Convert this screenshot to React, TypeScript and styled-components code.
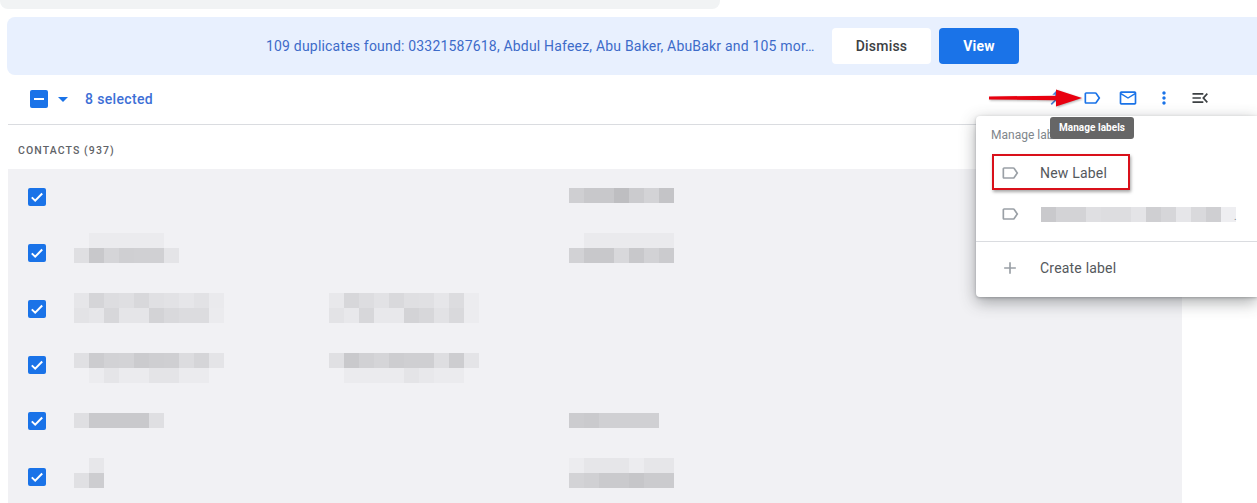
import styled, { createGlobalStyle } from "styled-components";

const GlobalStyle = createGlobalStyle`
  html, body {
    margin: 0;
    padding: 0;
    background: #fff;
    font-family: Roboto, "Liberation Sans", sans-serif;
  }
`;

const Page = styled.div`
  position: relative;
  width: 1257px;
  height: 503px;
  overflow: hidden;
  background: #fff;
`;

const SearchEdge = styled.div`
  width: 720px;
  height: 9px;
  background: #f1f3f4;
  border-radius: 0 0 8px 8px;
`;

const Banner = styled.div`
  display: flex;
  align-items: center;
  height: 58px;
  margin: 8px 0 0 7px;
  padding-left: 259px;
  background: #e8f0fe;
  border-radius: 8px 0 0 8px;
`;

const BannerText = styled.div`
  width: 566px;
  font-size: 14px;
  letter-spacing: 0.19px;
  color: #3d6bc9;
  white-space: nowrap;
`;

const BannerButton = styled.button<{ $primary?: boolean }>`
  height: 36px;
  width: ${(p) => (p.$primary ? "80px" : "99px")};
  margin-right: 8px;
  border: 0;
  border-radius: 4px;
  font-family: Roboto, sans-serif;
  font-size: 14px;
  font-weight: ${(p) => (p.$primary ? 700 : 500)};
  letter-spacing: 0.2px;
  background: ${(p) => (p.$primary ? "#1a73e8" : "#fff")};
  color: ${(p) => (p.$primary ? "#fff" : "#3c4043")};
`;

const Toolbar = styled.div`
  display: flex;
  align-items: center;
  height: 48px;
  margin-left: 8px;
  padding: 0 39px 1px 22px;
  border-bottom: 1px solid #dadce0;
`;

const Caret = styled.span`
  width: 0;
  height: 0;
  margin: 0 17px 0 10px;
  border-left: 5px solid transparent;
  border-right: 5px solid transparent;
  border-top: 5px solid #1a73e8;
`;

const SelectedCount = styled.span`
  flex: 1;
  padding-bottom: 1px;
  font-size: 14px;
  font-weight: 500;
  letter-spacing: 0.35px;
  color: #3d6fd6;
`;

const ToolButton = styled.span`
  display: flex;
  align-items: center;
  justify-content: center;
  width: 36px;
  height: 36px;
  margin-bottom: 2px;
`;

const Icon = styled.svg<{ $color: string }>`
  display: block;
  flex: none;
  width: 20px;
  height: 20px;
  fill: ${(p) => p.$color};
`;

const Checkbox = styled.span`
  display: flex;
  flex: none;
  align-items: center;
  justify-content: center;
  width: 18px;
  height: 18px;
  border-radius: 2px;
  background: #1a73e8;
`;

const SectionTitle = styled.div`
  height: 44px;
  margin-left: 18px;
  font-size: 10.5px;
  font-weight: 500;
  line-height: 51px;
  letter-spacing: 1.1px;
  color: #5f6368;
`;

const Table = styled.div`
  width: 1174px;
  margin-left: 8px;
  background: #f1f1f4;
`;

const Row = styled.div`
  display: grid;
  grid-template-columns: 46px 255px 240px 1fr;
  height: 56px;
  padding-left: 20px;
`;

const CheckCell = styled.div`
  display: flex;
  align-items: center;
`;

const Mosaic = styled.div<{ $top: number }>`
  margin-top: ${(p) => p.$top}px;
`;

const MosaicLine = styled.div<{ $skip?: number }>`
  display: flex;
  height: 15px;
  padding-left: ${(p) => (p.$skip ?? 0) * 15}px;
`;

const MosaicCell = styled.span`
  width: 15px;
  height: 15px;
`;

const Menu = styled.div`
  position: absolute;
  top: 116px;
  left: 976px;
  width: 281px;
  height: 181px;
  background: #fff;
  border-radius: 4px 0 0 4px;
  box-shadow: 0 5px 16px rgba(60, 64, 67, 0.45), 0 1px 3px rgba(60, 64, 67, 0.3);
`;

const MenuHeading = styled.div`
  height: 24px;
  padding: 12px 0 0 15px;
  font-size: 12px;
  line-height: 14px;
  color: #80868b;
`;

const MenuItem = styled.div`
  display: flex;
  align-items: center;
  gap: 20px;
  height: 41px;
  padding-left: 24px;
  font-size: 14px;
  letter-spacing: 0.2px;
  color: #54585c;
`;

const MenuDivider = styled.div`
  height: 1px;
  margin: 7px 0 5px;
  background: #dadce0;
`;

const BlurredLabel = styled.div`
  display: flex;
  align-items: flex-end;
  height: 15px;
  margin: 1px 0 0 1px;
  color: #80868b;
  font-size: 10px;
  line-height: 11px;
`;

const TrailingDot = styled.span`
  margin-left: -2px;
`;

const Tooltip = styled.div`
  position: absolute;
  top: 117px;
  left: 1050px;
  width: 84px;
  height: 22px;
  border-radius: 3px;
  background: #666;
  color: #fff;
  font-size: 10px;
  font-weight: 700;
  line-height: 22px;
  letter-spacing: 0.05px;
  text-align: center;
`;

const RedBox = styled.div`
  position: absolute;
  top: 154px;
  left: 992px;
  width: 134px;
  height: 32px;
  border: 2px solid #d9101a;
  box-shadow: 1px 2px 3px rgba(0, 0, 0, 0.35);
`;

const RedArrow = styled.svg`
  position: absolute;
  top: 88px;
  left: 986px;
  width: 98px;
  height: 20px;
  filter: drop-shadow(1px 1px 1px rgba(0, 0, 0, 0.3));
`;

const LABEL =
  "M17.63 5.84C17.27 5.33 16.67 5 16 5L5 5.01C3.9 5.01 3 5.9 3 7v10c0 1.1.9 1.99 2 1.99L16 19c.67 0 1.27-.33 1.63-.84L22 12l-4.37-6.16zM16 17H5V7h11l3.55 5L16 17z";

function Glyph({ d, color }: { d: string; color: string }) {
  return (
    <Icon viewBox="0 0 24 24" $color={color}>
      <path d={d} />
    </Icon>
  );
}

function Tick() {
  return (
    <svg width="18" height="18" viewBox="0 0 18 18">
      <path d="M3.8 9.4l3.4 3.3 7-7.2" fill="none" stroke="#fff" strokeWidth="2" />
    </svg>
  );
}

type Line = { skip?: number; cells: number[] };
type Block = { top: number; lines: Line[] };
type Contact = { name?: Block; email?: Block; phone?: Block };

const grey = (v: number) => `rgb(${v},${v},${v + 3})`;

function Blur({ block }: { block?: Block }) {
  if (!block) return <div />;
  return (
    <Mosaic $top={block.top}>
      {block.lines.map((line, i) => (
        <MosaicLine key={i} $skip={line.skip}>
          {line.cells.map((v, j) => (
            <MosaicCell key={j} style={{ background: grey(v) }} />
          ))}
        </MosaicLine>
      ))}
    </Mosaic>
  );
}

const contacts: Contact[] = [
  {
    phone: { top: 19, lines: [{ cells: [207, 200, 200, 190, 203, 211, 196] }] },
  },
  {
    name: {
      top: 8,
      lines: [
        { skip: 1, cells: [235, 235, 235, 235, 235] },
        { cells: [223, 200, 213, 207, 208, 208, 228] },
      ],
    },
    phone: {
      top: 8,
      lines: [
        { skip: 1, cells: [234, 234, 234, 234, 234, 234] },
        { cells: [210, 200, 200, 216, 200, 210, 203] },
      ],
    },
  },
  {
    name: {
      top: 12,
      lines: [
        { cells: [230, 213, 221, 223, 216, 224, 226, 230, 226, 234] },
        { cells: [227, 230, 215, 229, 229, 211, 217, 220, 220, 235] },
      ],
    },
    email: {
      top: 12,
      lines: [
        { cells: [232, 215, 221, 226, 217, 223, 224, 230, 220, 236] },
        { cells: [227, 232, 215, 232, 232, 211, 215, 226, 217, 236] },
      ],
    },
  },
  {
    name: {
      top: 16,
      lines: [
        { cells: [224, 204, 210, 211, 203, 206, 207, 220, 213, 228] },
        { skip: 1, cells: [236, 229, 235, 235, 228, 228, 235, 235] },
      ],
    },
    email: {
      top: 16,
      lines: [
        { cells: [224, 201, 209, 213, 205, 207, 207, 222, 205, 228] },
        { skip: 1, cells: [235, 235, 235, 235, 228, 232, 235, 235] },
      ],
    },
  },
  {
    name: { top: 20, lines: [{ cells: [223, 201, 201, 201, 201, 223] }] },
    phone: { top: 20, lines: [{ cells: [204, 202, 208, 208, 208, 208] }] },
  },
  {
    name: {
      top: 9,
      lines: [{ skip: 1, cells: [231] }, { cells: [224, 205] }],
    },
    phone: {
      top: 9,
      lines: [
        { cells: [236, 230, 230, 230, 236, 230, 230] },
        { cells: [211, 208, 202, 202, 198, 203, 203] },
      ],
    },
  },
];

const labelCells = [201, 211, 211, 223, 221, 221, 228, 207, 214, 230, 217, 207, 238];

export default function App() {
  return (
    <Page>
      <GlobalStyle />
      <SearchEdge />
      <Banner>
        <BannerText>109 duplicates found: 03321587618, Abdul Hafeez, Abu Baker, AbuBakr and 105 mor…</BannerText>
        <BannerButton>Dismiss</BannerButton>
        <BannerButton $primary>View</BannerButton>
      </Banner>
      <Toolbar>
        <Checkbox>
          <svg width="18" height="18" viewBox="0 0 18 18">
            <path d="M4 9h10" stroke="#fff" strokeWidth="2" />
          </svg>
        </Checkbox>
        <Caret />
        <SelectedCount>8 selected</SelectedCount>
        <ToolButton>
          <Glyph color="#4a7fd6" d="M17 20.41L18.41 19 15 15.59 13.59 17 17 20.41zM7.5 8H11v5.59L5.59 19 7 20.41l6-6V8h3.5L12 3.5 7.5 8z" />
        </ToolButton>
        <ToolButton>
          <Glyph color="#1a73e8" d={LABEL} />
        </ToolButton>
        <ToolButton>
          <Glyph color="#1a73e8" d="M20 4H4c-1.1 0-2 .9-2 2v12c0 1.1.9 2 2 2h16c1.1 0 2-.9 2-2V6c0-1.1-.9-2-2-2zm0 14H4V8l8 5 8-5v10zm-8-7L4 6h16l-8 5z" />
        </ToolButton>
        <ToolButton>
          <Glyph color="#1a73e8" d="M12 8c1.1 0 2-.9 2-2s-.9-2-2-2-2 .9-2 2 .9 2 2 2zm0 2c-1.1 0-2 .9-2 2s.9 2 2 2 2-.9 2-2-.9-2-2-2zm0 6c-1.1 0-2 .9-2 2s.9 2 2 2 2-.9 2-2-.9-2-2-2z" />
        </ToolButton>
        <ToolButton>
          <Glyph color="#3c4043" d="M3 6h13v2H3V6zm0 5h10v2H3v-2zm0 5h13v2H3v-2zM21.5 7.4L20.1 6 14.6 12l5.5 6 1.4-1.4L17.4 12l4.1-4.6z" />
        </ToolButton>
      </Toolbar>
      <SectionTitle>CONTACTS (937)</SectionTitle>
      <Table>
        {contacts.map((c, i) => (
          <Row key={i}>
            <CheckCell>
              <Checkbox>
                <Tick />
              </Checkbox>
            </CheckCell>
            <Blur block={c.name} />
            <Blur block={c.email} />
            <Blur block={c.phone} />
          </Row>
        ))}
      </Table>

      <Menu>
        <MenuHeading>Manage labels</MenuHeading>
        <MenuItem>
          <Glyph color="#9aa0a6" d={LABEL} />
          New Label
        </MenuItem>
        <MenuItem>
          <Glyph color="#9aa0a6" d={LABEL} />
          <BlurredLabel>
            {labelCells.map((v, i) => (
              <MosaicCell key={i} style={{ background: grey(v) }} />
            ))}
            <TrailingDot>.</TrailingDot>
          </BlurredLabel>
        </MenuItem>
        <MenuDivider />
        <MenuItem>
          <Glyph color="#9aa0a6" d="M19 13h-6v6h-2v-6H5v-2h6V5h2v6h6v2z" />
          Create label
        </MenuItem>
      </Menu>
      <Tooltip>Manage labels</Tooltip>
      <RedBox />
      <RedArrow viewBox="0 0 98 20">
        <path d="M3 8.4L72 7.8V12.200L3 11.400z" fill="#e8000f" />
        <path d="M70 1.500L96 10L70 18.500z" fill="#e8000f" />
      </RedArrow>
    </Page>
  );
}
